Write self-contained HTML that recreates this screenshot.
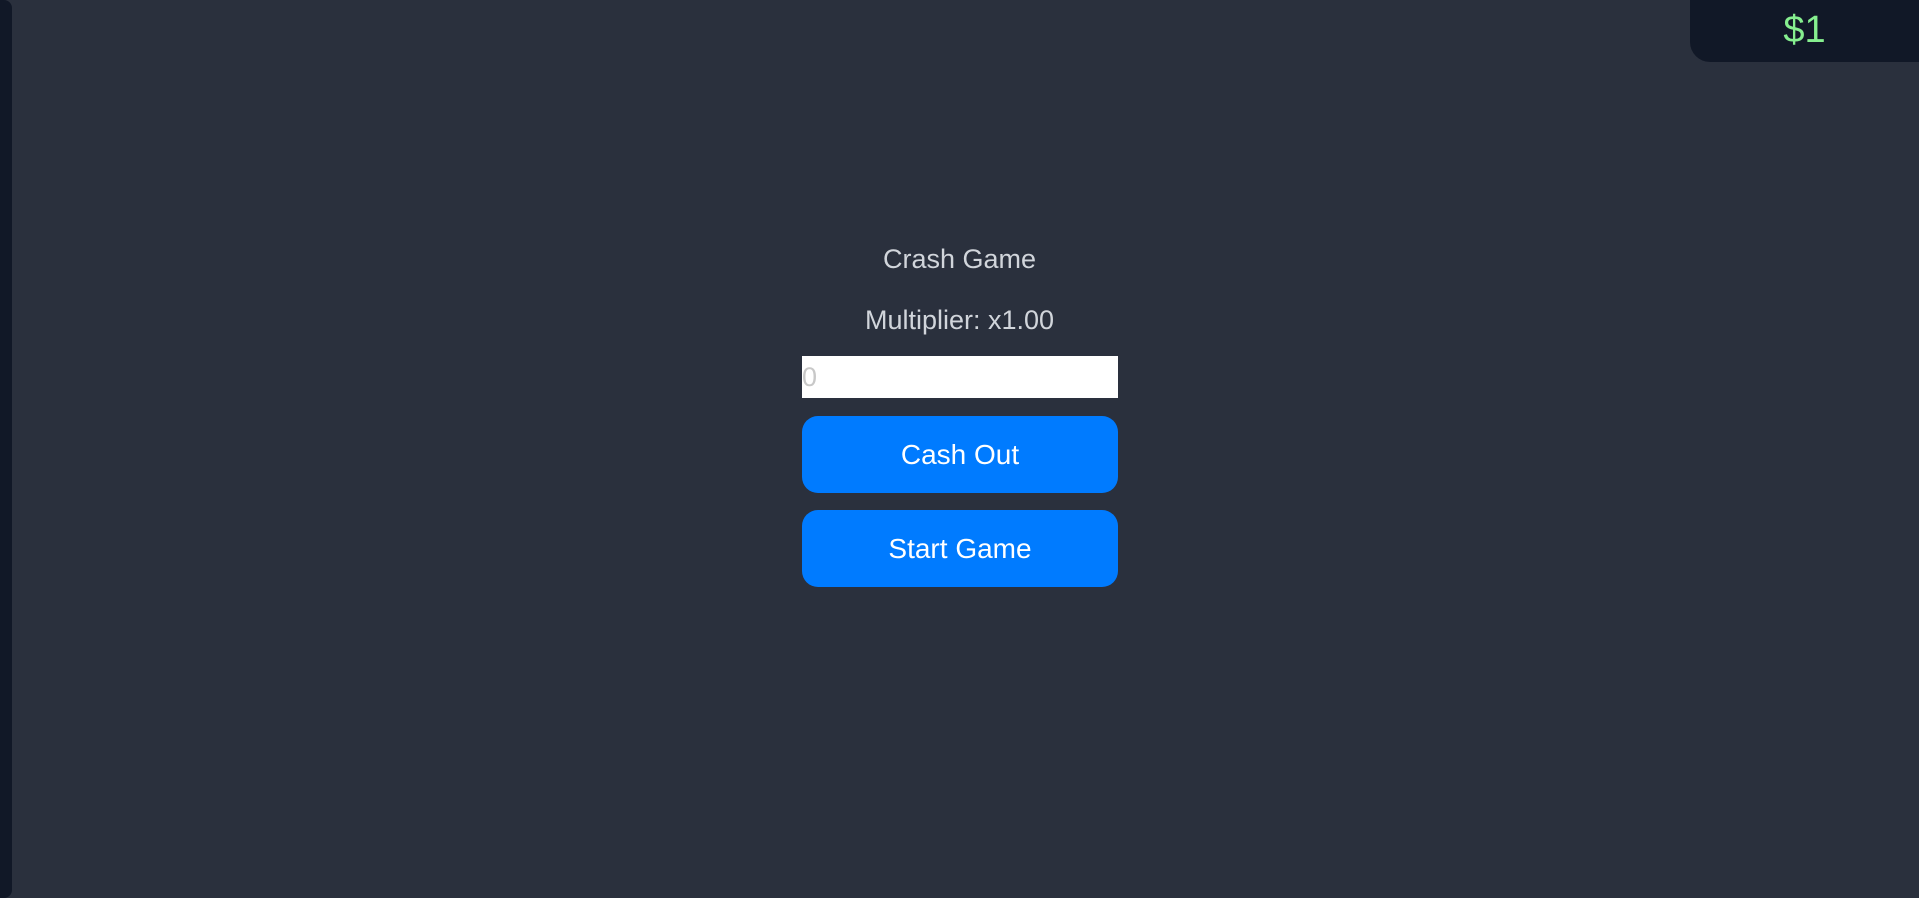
<!DOCTYPE html>
<html><head><style>
html,body{margin:0;padding:0;width:1919px;height:898px;background:#2a303d;overflow:hidden;font-family:"Segoe UI","Liberation Sans",sans-serif;}
.side{position:absolute;left:0;top:0;width:12px;height:898px;background:#111827;border-radius:0 8px 8px 0;}
.bal{position:absolute;left:1690px;top:0;width:229px;height:62px;background:#111827;border-radius:0 0 0 20px;color:#86ef8f;font-size:38px;text-align:center;line-height:60px;font-family:"Liberation Sans Narrow","Liberation Sans",sans-serif;}
.t{position:absolute;left:0;width:1919px;text-align:center;color:#d1d5db;font-size:27px;}
.inp{position:absolute;left:802px;top:356px;width:316px;height:42px;background:#fff;color:#c8c8c8;font-size:27px;line-height:42px;}
.btn{position:absolute;left:802px;width:316px;height:77px;background:#007bff;border-radius:16px;color:#fff;font-size:28px;text-align:center;line-height:78px;}
</style></head><body>
<div class="side"></div>
<div class="bal">$1</div>
<div class="t" style="top:244px">Crash Game</div>
<div class="t" style="top:305px">Multiplier: x1.00</div>
<div class="inp">0</div>
<div class="btn" style="top:416px">Cash Out</div>
<div class="btn" style="top:510px">Start Game</div>
</body></html>
